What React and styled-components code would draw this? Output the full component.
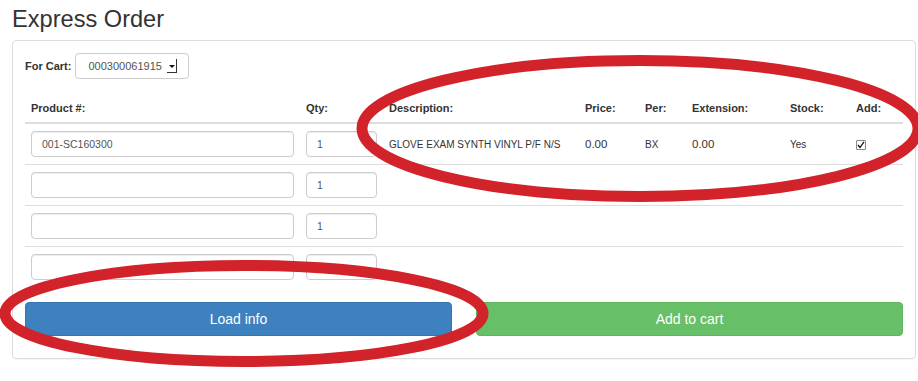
import React from "react";
import styled, { createGlobalStyle } from "styled-components";

const Global = createGlobalStyle`
  html, body { margin: 0; padding: 0; background: #fff; }
  body { font-family: "Liberation Sans", Arial, Helvetica, sans-serif; color: #333; }
  * { box-sizing: border-box; }
`;

const Page = styled.div`
  position: relative;
  width: 918px;
  height: 381px;
  overflow: hidden;
  padding: 0 2px 0 12px;
`;

const Title = styled.h3`
  margin: 6px 0 8px;
  font-size: 23.6px;
  line-height: 26px;
  font-weight: 400;
  color: #333;
`;

const Panel = styled.div`
  border: 1px solid #ddd;
  border-radius: 4px;
  padding: 12px 12px 22px;
  box-shadow: 0 1px 1px rgba(0, 0, 0, 0.04);
`;

const CartRow = styled.div`
  display: flex;
  align-items: center;
  gap: 4px;
  height: 26px;
  margin-bottom: 16px;
`;

const Label = styled.span`
  font-size: 11px;
  font-weight: 700;
  color: #333;
`;

const Select = styled.div`
  display: inline-flex;
  align-items: center;
  width: 114px;
  height: 26px;
  padding: 0 10px 0 12px;
  border: 1px solid #ccc;
  border-radius: 4px;
  font-size: 11px;
  color: #555;
  gap: 5px;
`;

const Arrow = styled.span`
  position: relative;
  display: inline-block;
  width: 10px;
  height: 14px;
  border-right: 1px solid #333;
  border-bottom: 1px solid #333;
  &::after {
    content: "";
    position: absolute;
    left: 2px;
    top: 6px;
    border-left: 3px solid transparent;
    border-right: 3px solid transparent;
    border-top: 3px solid #111;
  }
`;

const Table = styled.table`
  width: 100%;
  border-collapse: collapse;
  table-layout: fixed;
`;

const Col = styled.col`
  width: ${(p) => p.$w}px;
`;

const Th = styled.th`
  text-align: left;
  font-size: 11px;
  font-weight: 700;
  line-height: 17px;
  padding: 5px 6px;
  border-bottom: 2px solid #ddd;
  vertical-align: bottom;
  color: #333;
`;

const Row = styled.tr`
  & > td { border-top: 1px solid #ddd; }
  &:first-child > td { border-top: 0; }
`;

const Td = styled.td`
  padding: 7px 6px;
  vertical-align: middle;
  font-size: ${(p) => p.$size || 11}px;
  line-height: 17px;
  color: #333;
  white-space: nowrap;
`;

const Field = styled.input`
  display: block;
  width: 100%;
  height: 26px;
  padding: 0 10px;
  border: 1px solid #ccc;
  border-radius: 4px;
  box-shadow: inset 0 1px 1px rgba(0, 0, 0, 0.075);
  font-family: "Liberation Sans", Arial, sans-serif;
  font-size: 10.5px;
  color: #555;
  background: #fff;
  outline: none;
`;

const Check = styled.span`
  display: inline-flex;
  align-items: center;
  justify-content: center;
  width: 10px;
  height: 10px;
  border: 1px solid #888;
  border-radius: 1px;
  background: #fff;
  vertical-align: middle;
`;

const Buttons = styled.div`
  display: grid;
  grid-template-columns: 1fr 1fr;
  gap: 24px;
  margin-top: 15px;
`;

const Button = styled.button`
  height: 34px;
  border-radius: 4px;
  border: 1px solid ${(p) => (p.$variant === "success" ? "#5db45d" : "#3676ad")};
  background: ${(p) => (p.$variant === "success" ? "#67bf67" : "#3d81be")};
  color: #fff;
  font-family: "Liberation Sans", Arial, sans-serif;
  font-size: 14px;
  line-height: 20px;
  padding: 6px 12px;
  cursor: pointer;
`;

const Marks = styled.svg`
  position: absolute;
  left: 0;
  top: 0;
  pointer-events: none;
`;

const rows = [
  { product: "001-SC160300", qty: "1", desc: "GLOVE EXAM SYNTH VINYL P/F N/S", price: "0.00", per: "BX", ext: "0.00", stock: "Yes", add: true },
  { product: "", qty: "1" },
  { product: "", qty: "1" },
  { product: "", qty: "" },
];

export default function App() {
  return (
    <Page>
      <Global />
      <Title>Express Order</Title>
      <Panel>
        <CartRow>
          <Label>For Cart:</Label>
          <Select>
            <span>000300061915</span>
            <Arrow />
          </Select>
        </CartRow>
        <Table>
          <colgroup>
            <Col $w={275} />
            <Col $w={83} />
            <Col $w={196} />
            <Col $w={60} />
            <Col $w={47} />
            <Col $w={98} />
            <Col $w={66} />
            <Col $w={53} />
          </colgroup>
          <thead>
            <tr>
              <Th>Product #:</Th>
              <Th>Qty:</Th>
              <Th>Description:</Th>
              <Th>Price:</Th>
              <Th>Per:</Th>
              <Th>Extension:</Th>
              <Th>Stock:</Th>
              <Th>Add:</Th>
            </tr>
          </thead>
          <tbody>
            {rows.map((r, i) => (
              <Row key={i}>
                <Td><Field defaultValue={r.product} /></Td>
                <Td><Field defaultValue={r.qty} /></Td>
                <Td $size={10}>{r.desc}</Td>
                <Td $size={11.5}>{r.price}</Td>
                <Td $size={10}>{r.per}</Td>
                <Td $size={11.5}>{r.ext}</Td>
                <Td $size={10}>{r.stock}</Td>
                <Td>
                  {r.add && (
                    <Check>
                      <svg width="8" height="8" viewBox="0 0 8 8">
                        <path d="M1 4 L3 6.5 L7 0.8" fill="none" stroke="#111" strokeWidth="1.3" />
                      </svg>
                    </Check>
                  )}
                </Td>
              </Row>
            ))}
          </tbody>
        </Table>
        <Buttons>
          <Button>Load info</Button>
          <Button $variant="success">Add to cart</Button>
        </Buttons>
      </Panel>
      <Marks width="918" height="381" viewBox="0 0 918 381">
        <ellipse cx="640" cy="128.5" rx="278" ry="68" fill="none" stroke="#d2232a" strokeWidth="11" />
        <ellipse cx="244" cy="313.5" rx="239" ry="48" fill="none" stroke="#d2232a" strokeWidth="11" />
      </Marks>
    </Page>
  );
}
